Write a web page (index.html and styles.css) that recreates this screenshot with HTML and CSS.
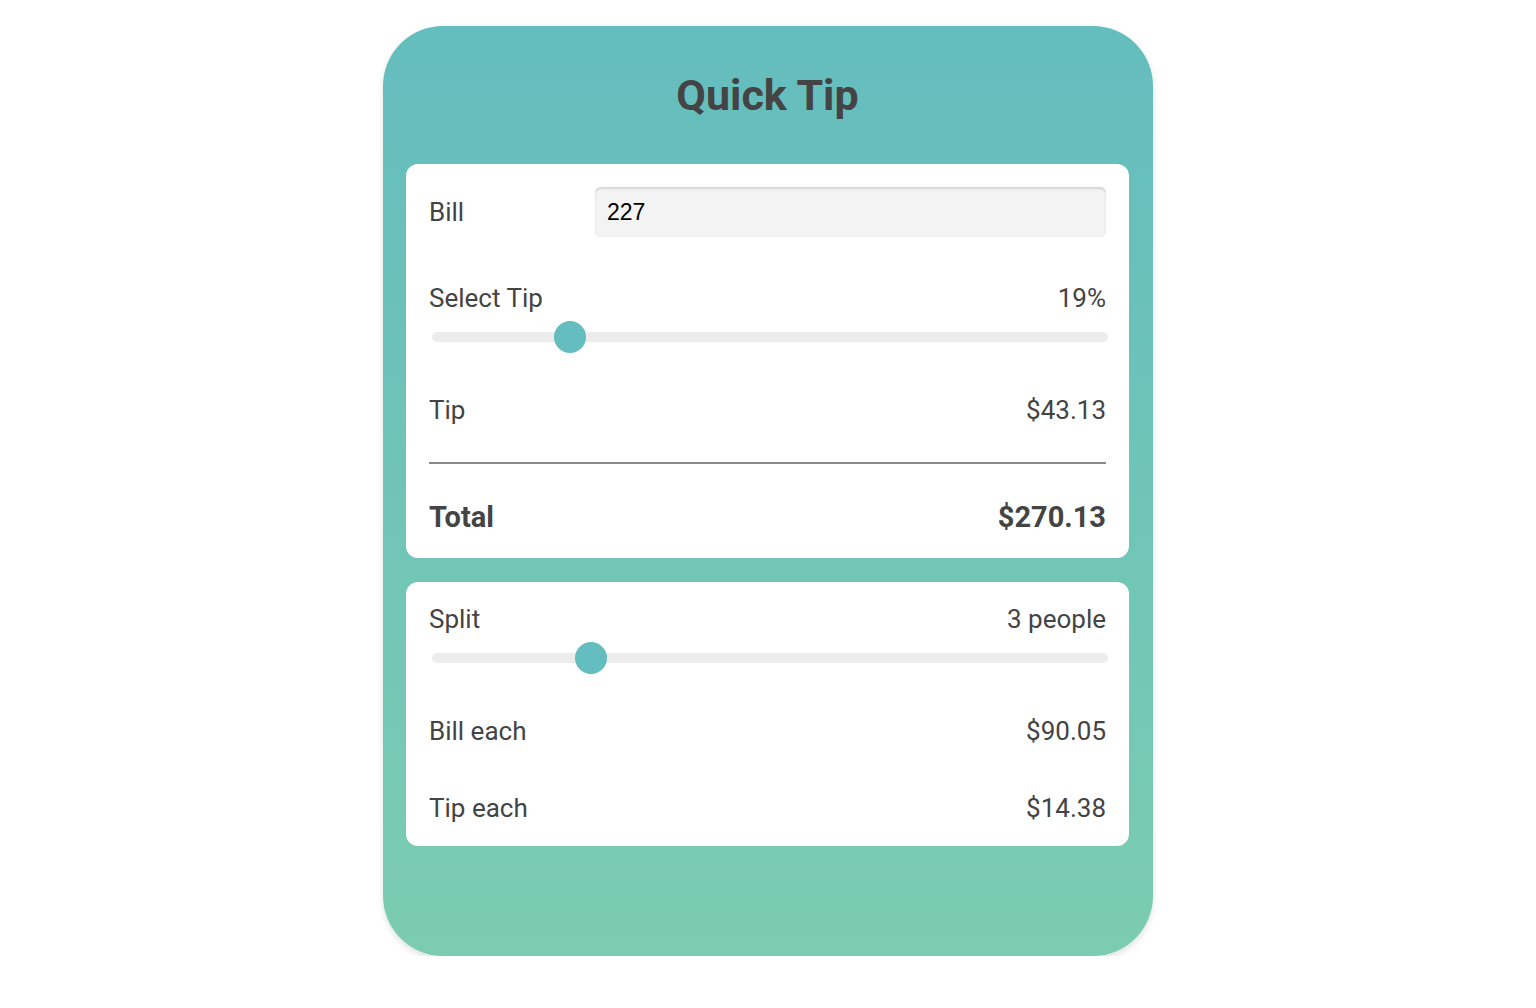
FILE: index.html
```html
<!DOCTYPE html>
<html lang="en">

<head>
  <meta charset="UTF-8" />
  <meta name="viewport" content="width=device-width, initial-scale=1.0" />
  <title>Quick Tip</title>
  <link rel="stylesheet" href="styles.css">
</head>

<body>
  <div class="app">
    <h1 class="title">Quick Tip</h1>

    <!-- bill + tip -->
    <div class="card">
      <div class="row bill-row">
        <label class="label" for="bill">Bill</label>
        <input class="bill-input" id="bill" type="text" value="227" />
      </div>
      <div class="row head-row">
        <span class="label">Select Tip</span>
        <span class="value">19%</span>
      </div>
      <input class="slider" type="range" min="0" max="100" value="19" />
      <div class="row result-row">
        <span class="label">Tip</span>
        <span class="value">$43.13</span>
      </div>
      <hr class="divider" />
      <div class="row total-row">
        <span class="label">Total</span>
        <span class="value">$270.13</span>
      </div>
    </div>

    <!-- split -->
    <div class="card split-card">
      <div class="row head-row first">
        <span class="label">Split</span>
        <span class="value">3 people</span>
      </div>
      <input class="slider" type="range" min="1" max="10" value="3" />
      <div class="row result-row">
        <span class="label">Bill each</span>
        <span class="value">$90.05</span>
      </div>
      <div class="row each-row">
        <span class="label">Tip each</span>
        <span class="value">$14.38</span>
      </div>
    </div>
  </div>
</body>

</html>
```

FILE: styles.css
```css
* {
  margin: 0;
  padding: 0;
  box-sizing: border-box;
}

body {
  background: #fff;
  font-family: Roboto, "Liberation Sans", sans-serif;
  color: #444;
}

.app {
  width: 770px;
  height: 930px;
  margin: 26px auto 0;
  padding: 44px 24px 0 23px;
  border-radius: 60px;
  background: linear-gradient(180deg, #64bdbe 0%, #7bccb0 100%);
  box-shadow: 0 3px 6px rgba(0, 0, 0, 0.12);
}

.title {
  font-size: 43px;
  font-weight: 700;
  line-height: 50px;
  text-align: center;
  color: #444;
  margin-bottom: 44px;
}

.card {
  background: #fff;
  border-radius: 12px;
  padding: 23px 23px 25px;
}

.split-card {
  margin-top: 24px;
  padding: 23px 23px 24px;
}

.row {
  display: flex;
  justify-content: space-between;
  align-items: center;
  font-size: 26px;
  line-height: 28px;
}

.label,
.value {
  color: #444;
}

.bill-row {
  height: 50px;
}

.bill-input {
  width: 511px;
  height: 50px;
  border: none;
  outline: none;
  border-radius: 6px;
  background: #f3f3f3;
  box-shadow: inset 0 2px 2px rgba(0, 0, 0, 0.12), 0 0 1px rgba(0, 0, 0, 0.15);
  padding: 0 12px;
  font: 23px "Liberation Sans", Arial, sans-serif;
  color: #000;
}

.head-row {
  margin-top: 47px;
}

.head-row.first {
  margin-top: 0;
}

.slider {
  display: block;
  -webkit-appearance: none;
  appearance: none;
  width: calc(100% - 1px);
  margin: 9px 0 0 3px;
  height: 32px;
  background: transparent;
  outline: none;
}

.slider::-webkit-slider-runnable-track {
  height: 10px;
  border-radius: 5px;
  background: #ececec;
}

.slider::-webkit-slider-thumb {
  -webkit-appearance: none;
  width: 32px;
  height: 32px;
  margin-top: -11px;
  border-radius: 50%;
  background: #64bdbe;
  border: none;
  cursor: pointer;
}

.result-row {
  margin-top: 43px;
}

.divider {
  border: none;
  border-top: 2px solid #8a8a8a;
  margin-top: 38px;
}

.total-row {
  margin-top: 37px;
  font-size: 29px;
  line-height: 32px;
  font-weight: 700;
}

.each-row {
  margin-top: 49px;
}
```
